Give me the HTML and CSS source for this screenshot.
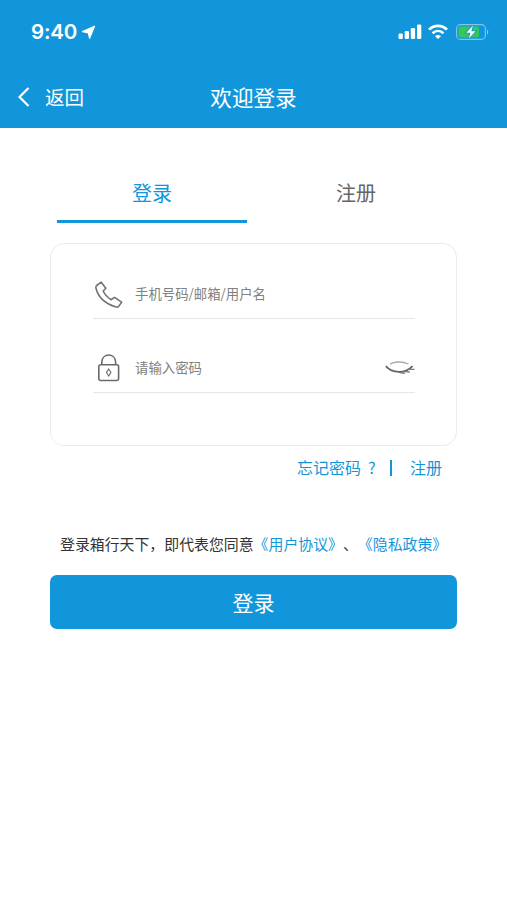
FILE: index.html
```html
<!DOCTYPE html>
<html lang="zh-CN">
<head>
    <meta charset="utf-8">
    <meta name="viewport" content="width=device-width, initial-scale=1">
    <title>欢迎登录</title>
    <link rel="stylesheet" href="styles.css">
</head>

<body>
    <header class="header">
        <div class="status">
            <span class="time">9:40</span>
            <svg class="location" width="15" height="15" viewBox="0 0 15 15"><path d="M13.500 1.200 8.600 13.300 7.300 7.800 1.500 6.600Z" fill="#fff" stroke="#fff" stroke-width="1.200" stroke-linejoin="round"/></svg>
            <div class="status-icons">
                <svg width="24" height="16" viewBox="0 0 24 16" fill="#fff">
                    <rect x="0.500" y="9.500" width="4.300" height="5.500" rx="1.200"/>
                    <rect x="6.700" y="7" width="4.300" height="8" rx="1.200"/>
                    <rect x="12.800" y="4" width="4.300" height="11" rx="1.200"/>
                    <rect x="19" y="0.500" width="4.300" height="14.500" rx="1.200"/>
                </svg>
                <svg class="wifi" width="20" height="16" viewBox="0 0 20 16" fill="none" stroke="#fff" stroke-width="2.600">
                    <path d="M1 5.600C6.200 .6 13.800 .6 19 5.600"/>
                    <path d="M4.500 9.300C7.800 6.200 12.200 6.200 15.500 9.300"/>
                    <path d="M10 15 7 12.200C8.600 10.700 11.400 10.700 13 12.200Z" fill="#fff" stroke="none"/>
                </svg>
                <svg width="33" height="16" viewBox="0 0 33 16">
                    <rect x=".6" y=".6" width="28.800" height="14.800" rx="4" fill="none" stroke="#7fc5ee" stroke-width="1.100"/>
                    <path d="M31 5.500C32.700 6 32.700 10 31 10.500Z" fill="#7fc5ee"/>
                    <rect x="2.500" y="2.500" width="20.500" height="11" rx="2" fill="#34c759"/>
                    <path d="M17 1.500 10.300 8.800H14.500L12.800 14.500 19.500 7.200H15.300Z" fill="#fff" stroke="#1296db" stroke-width="1.600" paint-order="stroke"/>
                </svg>
            </div>
        </div>
        <nav class="navbar">
            <a class="back">
                <svg width="12" height="20" viewBox="0 0 12 20"><path d="M10.500 1 1.500 10 10.500 19" fill="none" stroke="#fff" stroke-width="2.200"/></svg>
                返回
            </a>
            <h1>欢迎登录</h1>
        </nav>
    </header>

    <main class="main">
        <div class="tabs">
            <a class="tab active">登录</a>
            <a class="tab">注册</a>
        </div>

        <form class="card">
            <label class="field">
                <svg width="32" height="28" viewBox="0 0 32 28"><path d="M3.600 5.500 8.200 2.200 12.800 8.300 10.200 11C12 15 14.500 17.500 18.300 19.700L21.500 17.300 28.600 22.200 25.500 26.600C24.700 27.300 23.600 27.300 22.300 26.800C12.300 23.500 5 16.500 3 8.200C2.700 7 2.800 6.200 3.600 5.500Z" fill="none" stroke="#737373" stroke-width="1.600" stroke-linejoin="round"/></svg>
                <input type="text" placeholder="手机号码/邮箱/用户名">
            </label>
            <label class="field">
                <svg width="32" height="28" viewBox="0 0 32 28" fill="none" stroke="#6b6b6b" stroke-width="1.600">
                    <rect x="5.800" y="10.800" width="19.800" height="15.700" rx="2"/>
                    <path d="M8.800 10.800V8C9.300-1.300 22.100-1.300 22.600 8V10.800"/>
                    <path d="M15.700 15 17.900 18.500 15.700 22 13.500 18.500Z" stroke-width="1.100"/>
                </svg>
                <input type="password" placeholder="请输入密码">
                <svg class="eye" width="30" height="14" viewBox="0 0 30 14" fill="none">
                    <path d="M5 3.300C9 .3 18 .3 23.500 3" stroke="#aaa" stroke-width="1.300"/>
                    <path d="M.8 5.200C7 12.300 20 13.500 27.500 5.200" stroke="#666" stroke-width="1.800"/>
                    <path d="M15 11.600 20 12.400M19 10.300 25 11.200M22.500 8.300 29.500 8.400" stroke="#777" stroke-width="1.200"/>
                </svg>
            </label>
        </form>

        <div class="links">
            <a>忘记密码</a><span class="ask">?</span><span class="bar"></span><a>注册</a>
        </div>

        <p class="terms">登录箱行天下，即代表您同意<a>《用户协议》</a>、<a>《隐私政策》</a></p>

        <button class="submit">登录</button>
    </main>
</body>
</html>
```
FILE: styles.css
```css
* {
    box-sizing: border-box;
}

body {
    margin: 0;
    background: #fff;
    color: #333;
    font-family: "Noto Sans CJK SC", sans-serif;
}

svg {
    display: block;
    flex: none;
}

.header {
    height: 128px;
    background: #1296db;
    color: #fff;
}

.status {
    display: flex;
    align-items: center;
    height: 64px;
    padding: 0 18px 0 31px;
}

.time {
    font: 600 20.5px/24px Inter, sans-serif;
    letter-spacing: -.2px;
}

.location {
    margin-left: 4px;
}

.status-icons {
    display: flex;
    align-items: center;
    margin-left: auto;
}

.wifi {
    margin: 0 8px 0 6px;
}

.navbar {
    display: grid;
    grid-template-columns: 1fr auto 1fr;
    align-items: center;
    height: 64px;
    padding: 1px 18px 0;
}

.back {
    display: flex;
    align-items: center;
    gap: 15px;
    font-size: 19.5px;
    line-height: 28px;
}

h1 {
    margin: 0;
    font-size: 21.6px;
    font-weight: 400;
    line-height: 30px;
}

.main {
    padding: 40px 50px 0;
}

.tabs {
    display: flex;
    gap: 14px;
    padding-left: 7px;
}

.tab {
    width: 190px;
    height: 55px;
    padding-top: 10px;
    border-bottom: 3px solid transparent;
    color: #666;
    font-size: 20px;
    line-height: 30px;
    text-align: center;
}

.tab.active {
    border-color: #1296db;
    color: #1296db;
}

.card {
    height: 203px;
    margin-top: 20px;
    padding: 25px 41px 0 42px;
    border: 1px solid #ebebeb;
    border-radius: 14px;
}

.field {
    display: flex;
    align-items: center;
    height: 50px;
    border-bottom: 1px solid #e6e6e6;
}

.field + .field {
    height: 49px;
    margin-top: 25px;
}

.field input {
    flex: 1;
    min-width: 0;
    margin: 0 0 2px 10px;
    padding: 0;
    border: 0;
    outline: 0;
    background: none;
    font: 13.4px/20px "Noto Sans CJK SC", sans-serif;
}

.field input::placeholder {
    color: #808080;
}

.links {
    display: flex;
    align-items: center;
    justify-content: flex-end;
    height: 24px;
    margin-top: 9px;
    padding-right: 15px;
    color: #1296db;
    font-size: 16px;
    line-height: 24px;
}

.ask {
    margin-left: 7px;
}

.bar {
    width: 1.5px;
    height: 16px;
    margin: 2px 18px 0 15px;
    background: #1296db;
}

.terms {
    margin: 54px 0 0 10px;
    font-size: 14.9px;
    line-height: 22px;
    white-space: nowrap;
    text-spacing-trim: space-all;
}

.terms a {
    color: #1296db;
}

.submit {
    display: block;
    width: 100%;
    height: 54px;
    margin-top: 20px;
    padding: 0;
    border: 0;
    border-radius: 7px;
    background: #1296db;
    color: #fff;
    font: 21px/30px "Noto Sans CJK SC", sans-serif;
}
```
